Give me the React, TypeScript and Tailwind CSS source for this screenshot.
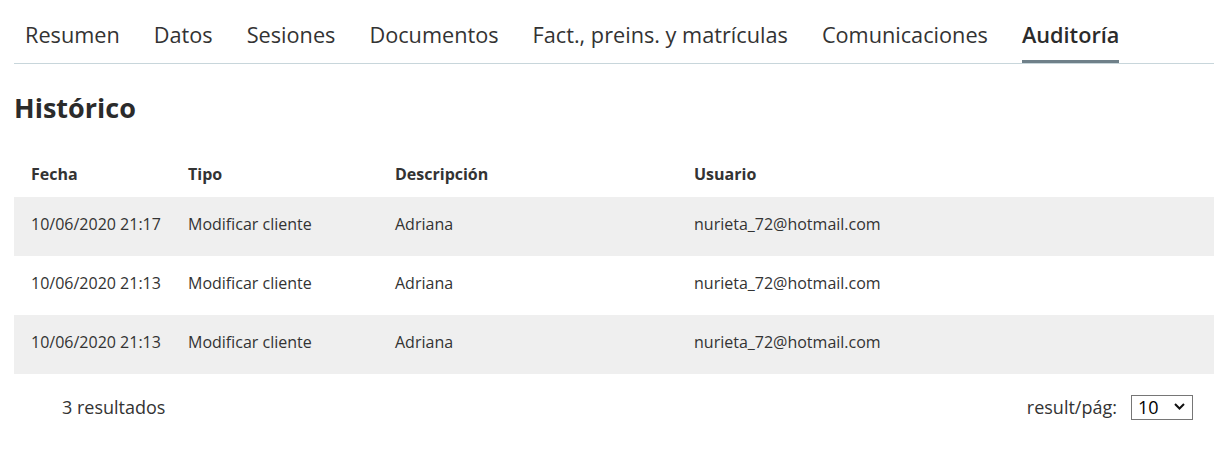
import { useState } from 'react'

const tabs = ['Resumen', 'Datos', 'Sesiones', 'Documentos', 'Fact., preins. y matrículas', 'Comunicaciones', 'Auditoría']

const rows = [
  { fecha: '10/06/2020 21:17', tipo: 'Modificar cliente', desc: 'Adriana', usuario: 'nurieta_72@hotmail.com' },
  { fecha: '10/06/2020 21:13', tipo: 'Modificar cliente', desc: 'Adriana', usuario: 'nurieta_72@hotmail.com' },
  { fecha: '10/06/2020 21:13', tipo: 'Modificar cliente', desc: 'Adriana', usuario: 'nurieta_72@hotmail.com' },
]

export default function App() {
  const [active] = useState('Auditoría')
  const [perPage, setPerPage] = useState('10')

  return (
    <div className="min-h-[462px] bg-white pl-[14px] pr-[8px] pt-[18px] text-[#333] [font-family:'Open_Sans','Noto_Sans',sans-serif]">
      {/* pestañas */}
      <div className="flex gap-[34px] border-b border-[#c8d6db] pl-[11px]">
        {tabs.map((t) => (
          <div
            key={t}
            className={
              'h-[45px] border-b-[3px] pt-[1px] text-[21.7px] leading-[32px] ' +
              (t === active ? 'border-[#6f8089] font-semibold text-[#2b2b2b]' : 'border-transparent')
            }
          >
            {t}
          </div>
        ))}
      </div>

      <h1 className="mt-[26px] text-[27px] leading-[36px] font-bold text-[#2b2b2b]">Histórico</h1>

      {/* tabla */}
      <table className="mt-[24px] w-full border-collapse text-left text-[16px]">
        <thead>
          <tr className="h-[47px]">
            <th className="w-[157px] pl-[17px] font-bold">Fecha</th>
            <th className="w-[207px] pl-[17px] font-bold">Tipo</th>
            <th className="w-[299px] pl-[17px] font-bold">Descripción</th>
            <th className="pl-[17px] font-bold">Usuario</th>
          </tr>
        </thead>
        <tbody>
          {rows.map((r, i) => (
            <tr key={i} className={'h-[59px] ' + (i % 2 === 0 ? 'bg-[#efefef]' : 'bg-white')}>
              <td className="pl-[17px] pb-[5px]">{r.fecha}</td>
              <td className="pl-[17px] pb-[5px]">{r.tipo}</td>
              <td className="pl-[17px] pb-[5px]">{r.desc}</td>
              <td className="pl-[17px] pb-[5px]">{r.usuario}</td>
            </tr>
          ))}
        </tbody>
      </table>

      {/* pie */}
      <div className="mt-[20px] flex items-center justify-between">
        <span className="pl-[48px] text-[18px]">3 resultados</span>
        <div className="flex items-center gap-[14px] pr-[21px] text-[18px]">
          <span>result/pág:</span>
          <div className="relative">
            <select
              value={perPage}
              onChange={(e) => setPerPage(e.target.value)}
              className="h-[25px] w-[62px] appearance-none border border-[#767676] bg-white pl-[6px] text-[18px] leading-[23px] text-black"
            >
              <option>10</option>
              <option>25</option>
              <option>50</option>
            </select>
            <svg className="pointer-events-none absolute right-[8px] top-[9px]" width="11" height="7" viewBox="0 0 11 7">
              <path d="M1 1l4.5 4.5L10 1" fill="none" stroke="#111" strokeWidth="2" />
            </svg>
          </div>
        </div>
      </div>
    </div>
  )
}
